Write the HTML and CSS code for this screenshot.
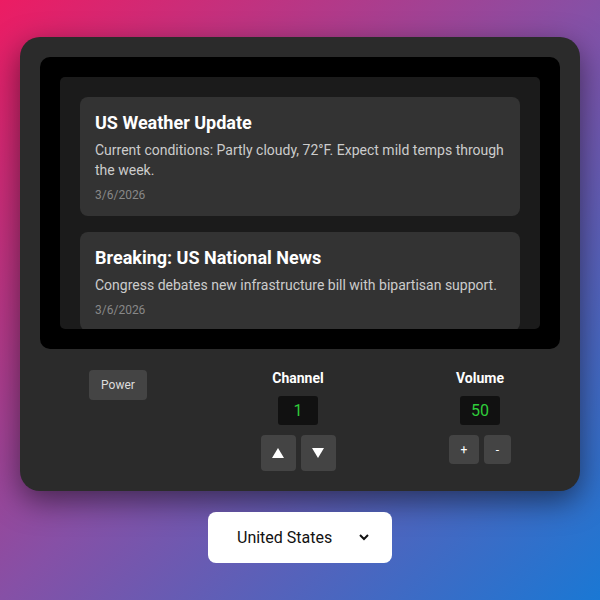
FILE: index.html
```html
<!DOCTYPE html>
<html lang="en">
<head>
<meta charset="utf-8">
<title>TV News</title>
<link rel="stylesheet" href="styles.css">
</head>
<body>
<div class="tv">
  <div class="screen">
    <div class="feed">
      <div class="card">
        <h3 class="card-title">US Weather Update</h3>
        <p class="card-body">Current conditions: Partly cloudy, 72°F. Expect mild temps through the week.</p>
        <div class="card-date">3/6/2026</div>
      </div>
      <div class="card">
        <h3 class="card-title">Breaking: US National News</h3>
        <p class="card-body">Congress debates new infrastructure bill with bipartisan support.</p>
        <div class="card-date">3/6/2026</div>
      </div>
    </div>
  </div>
  <div class="controls">
    <button class="btn power">Power</button>
    <div class="group">
      <div class="label">Channel</div>
      <div class="display">1</div>
      <div class="btns">
        <button class="btn arrow"><svg width="12" height="10" viewBox="0 0 12 10"><path d="M6 0 L12 10 L0 10 Z" fill="#fff"/></svg></button>
        <button class="btn arrow"><svg width="12" height="10" viewBox="0 0 12 10"><path d="M0 0 L12 0 L6 10 Z" fill="#fff"/></svg></button>
      </div>
    </div>
    <div class="group">
      <div class="label">Volume</div>
      <div class="display">50</div>
      <div class="btns small">
        <button class="btn vol">+</button>
        <button class="btn vol">-</button>
      </div>
    </div>
  </div>
</div>
<div class="select">
  <span class="select-text">United States</span>
  <svg class="chev" width="10" height="7" viewBox="0 0 10 7"><path d="M1 1 L5 5 L9 1" fill="none" stroke="#111" stroke-width="2"/></svg>
</div>
</body>
</html>
```

FILE: styles.css
```css
html, body {
  margin: 0;
  padding: 0;
}
body {
  width: 600px;
  height: 600px;
  background: linear-gradient(135deg, #ec1c63 0%, #8650a6 50%, #1a78d4 100%);
  font-family: Roboto, "Liberation Sans", sans-serif;
  display: flex;
  flex-direction: column;
  align-items: center;
  justify-content: center;
  gap: 21px;
  overflow: hidden;
}
.tv {
  width: 520px;
  padding: 20px;
  background: #2b2b2b;
  border-radius: 20px;
  box-shadow: 0 10px 30px rgba(0, 0, 0, 0.5);
}
.screen {
  background: #000;
  border-radius: 10px;
  padding: 20px;
  height: 252px;
}
.feed {
  background: #1b1b1b;
  border-radius: 5px;
  height: 232px;
  padding: 20px 20px 0;
  overflow: hidden;
  display: flex;
  flex-direction: column;
  gap: 16px;
}
.card {
  background: #333;
  border-radius: 8px;
  padding: 15px 15px 14px;
  flex-shrink: 0;
}
.card-title {
  margin: 0 0 7px;
  font-size: 18px;
  line-height: 21px;
  font-weight: 700;
  color: #fff;
}
.card-body {
  margin: 0 0 8px;
  font-size: 14px;
  line-height: 20px;
  color: #ccc;
}
.card-date {
  font-size: 12px;
  line-height: 14px;
  color: #888;
}
.controls {
  display: flex;
  justify-content: space-between;
  align-items: flex-start;
  padding: 21px 49px 0;
}
.btn {
  border: none;
  background: #444;
  color: #ddd;
  border-radius: 4px;
  font-family: Roboto, "Liberation Sans", sans-serif;
  padding: 0;
  cursor: pointer;
}
.power {
  width: 58px;
  height: 30px;
  font-size: 12px;
}
.group {
  display: flex;
  flex-direction: column;
  align-items: center;
}
.label {
  color: #fff;
  font-size: 14px;
  font-weight: 700;
  line-height: 17px;
}
.display {
  margin-top: 9px;
  width: 40px;
  height: 29px;
  background: #111;
  border-radius: 3px;
  color: #2fcc3a;
  font-size: 16px;
  display: flex;
  align-items: center;
  justify-content: center;
}
.btns {
  margin-top: 10px;
  display: flex;
  gap: 5px;
}
.arrow {
  width: 35px;
  height: 36px;
  display: flex;
  align-items: center;
  justify-content: center;
}
.vol {
  width: 30px;
  height: 29px;
  font-size: 12px;
  color: #fff;
}
.vol + .vol {
  width: 27px;
}
.select {
  width: 184px;
  height: 51px;
  box-sizing: border-box;
  background: #fff;
  border-radius: 8px;
  display: flex;
  align-items: center;
  padding: 0 23px 0 29px;
  justify-content: space-between;
}
.select-text {
  font-size: 16px;
  color: #111;
}
.chev {
  display: block;
}
```
